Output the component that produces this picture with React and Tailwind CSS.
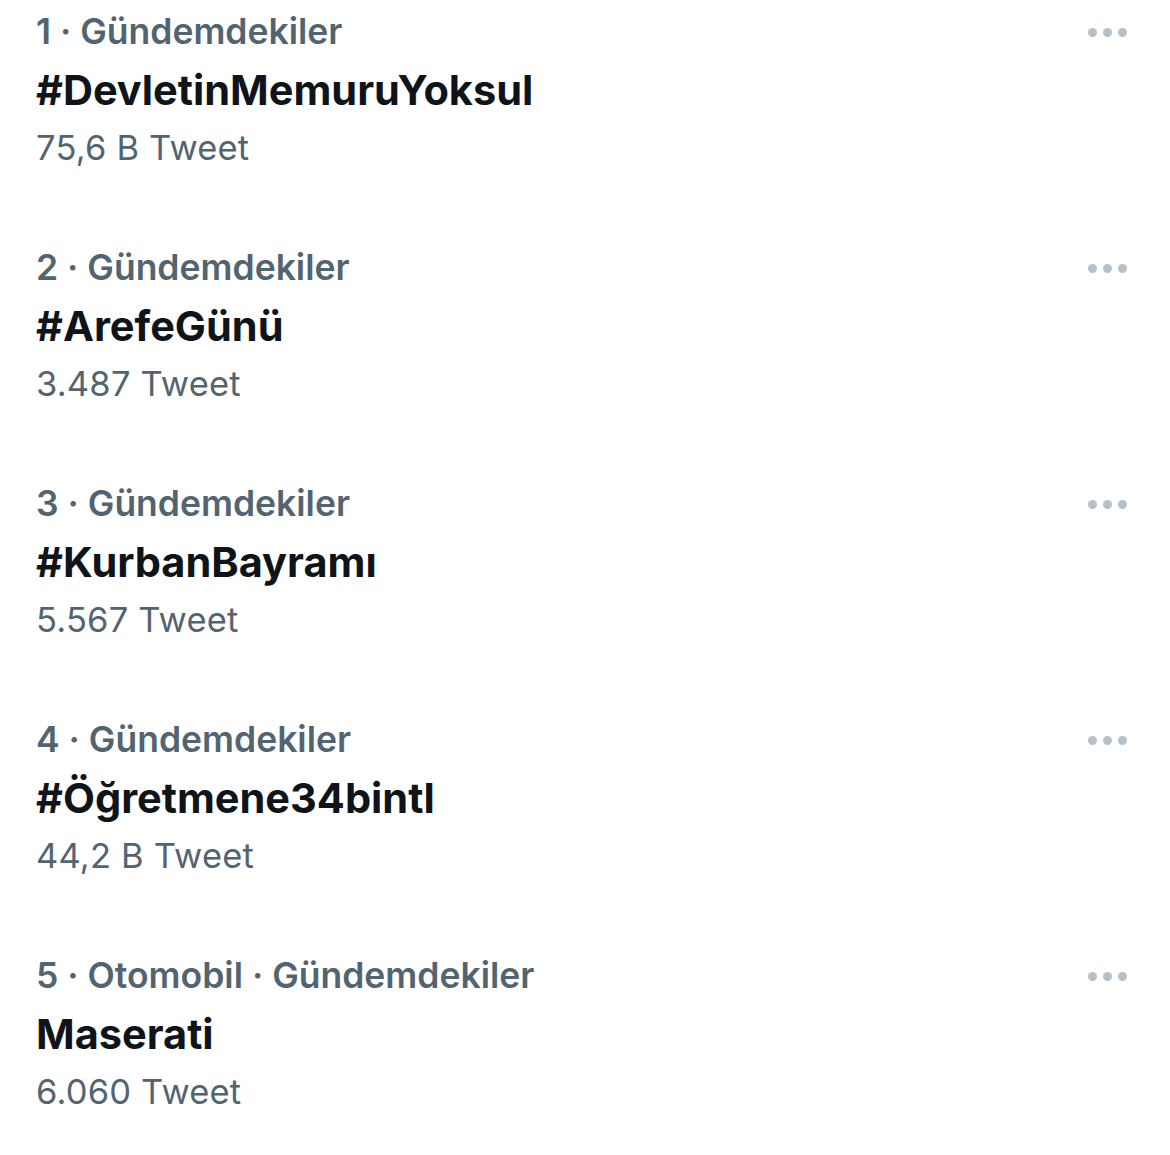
const trends = [
  { meta: '1 · Gündemdekiler', title: '#DevletinMemuruYoksul', count: '75,6 B Tweet' },
  { meta: '2 · Gündemdekiler', title: '#ArefeGünü', count: '3.487 Tweet' },
  { meta: '3 · Gündemdekiler', title: '#KurbanBayramı', count: '5.567 Tweet' },
  { meta: '4 · Gündemdekiler', title: '#Öğretmene34bintl', count: '44,2 B Tweet' },
  { meta: '5 · Otomobil · Gündemdekiler', title: 'Maserati', count: '6.060 Tweet' },
];

const MoreDots = () => (
  <div className="flex items-center gap-[6px]">
    <span className="h-[9px] w-[9px] rounded-full bg-[#b4c1cb]" />
    <span className="h-[9px] w-[9px] rounded-full bg-[#b4c1cb]" />
    <span className="h-[9px] w-[9px] rounded-full bg-[#b4c1cb]" />
  </div>
);

const TrendRow = ({ meta, title, count }) => (
  <div className="flex h-[236px] items-start justify-between pl-[36px] pr-[43px] pt-[10px]">
    <div className="flex flex-col">
      <p className="h-[44px] text-[35.5px] font-semibold leading-[44px] text-[#536471]">{meta}</p>
      <p className="mt-[14px] h-[44px] text-[41.5px] font-bold leading-[44px] text-[#0f1419]">{title}</p>
      <p className="mt-[14px] h-[44px] text-[34.5px] leading-[44px] tracking-[0.2px] text-[#536471]">{count}</p>
    </div>
    <div className="pt-[18px]">
      <MoreDots />
    </div>
  </div>
);

export default function App() {
  return (
    <div className="min-h-[1155px] w-[1170px] bg-white font-['Inter',sans-serif]">
      {trends.map((t) => (
        <TrendRow key={t.title} {...t} />
      ))}
    </div>
  );
}
